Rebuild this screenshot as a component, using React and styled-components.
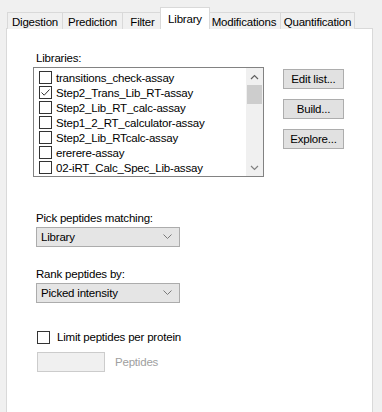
import React from "react";
import styled, { createGlobalStyle } from "styled-components";

const tabs = [
  { label: "Digestion", width: 56 },
  { label: "Prediction", width: 61 },
  { label: "Filter", width: 41 },
  { label: "Library", width: 50, active: true },
  { label: "Modifications", width: 74 },
  { label: "Quantification", width: 75 },
];

const libraries = [
  { name: "transitions_check-assay" },
  { name: "Step2_Trans_Lib_RT-assay", checked: true },
  { name: "Step2_Lib_RT_calc-assay" },
  { name: "Step1_2_RT_calculator-assay" },
  { name: "Step2_Lib_RTcalc-assay" },
  { name: "ererere-assay" },
  { name: "02-iRT_Calc_Spec_Lib-assay" },
];

const Chevron = ({ up }) => (
  <svg width="9" height="6" viewBox="0 0 9 6">
    <path
      d={up ? "M1 5 L4.5 1.5 L8 5" : "M1 1 L4.5 4.5 L8 1"}
      fill="none"
      stroke={up ? "#606060" : "#808080"}
      strokeWidth="1.2"
    />
  </svg>
);

const Check = ({ checked }) => (
  <CheckBox>
    {checked && (
      <svg width="11" height="11" viewBox="0 0 11 11">
        <path d="M1.5 5.5 L4.2 8.2 L9.5 2.5" fill="none" stroke="#333" strokeWidth="1" />
      </svg>
    )}
  </CheckBox>
);

const Dropdown = ({ value }) => (
  <Select>
    <span>{value}</span>
    <svg width="9" height="6" viewBox="0 0 9 6">
      <path d="M0.5 0.5 L4.5 4.5 L8.5 0.5" fill="none" stroke="#7a7a7a" strokeWidth="1" />
    </svg>
  </Select>
);

const App = () => (
  <>
    <Global />
    <Page>
      <TabStrip>
        {tabs.map(t => (
          <Tab key={t.label} $width={t.width} $active={t.active}>
            {t.label}
          </Tab>
        ))}
      </TabStrip>
      <Panel>
        <Label>Libraries:</Label>
        <LibraryRow>
          <ListBox>
            <Items>
              {libraries.map(lib => (
                <Item key={lib.name}>
                  <Check checked={lib.checked} />
                  {lib.name}
                </Item>
              ))}
            </Items>
            <ScrollBar>
              <ArrowCell>
                <Chevron up />
              </ArrowCell>
              <Thumb />
              <Track />
              <ArrowCell>
                <Chevron />
              </ArrowCell>
            </ScrollBar>
          </ListBox>
          <Buttons>
            <Button>Edit list...</Button>
            <Button>Build...</Button>
            <Button>Explore...</Button>
          </Buttons>
        </LibraryRow>

        <Field $top={34}>
          <FieldLabel>Pick peptides matching:</FieldLabel>
          <Dropdown value="Library" />
        </Field>

        <Field $top={20}>
          <FieldLabel>Rank peptides by:</FieldLabel>
          <Dropdown value="Picked intensity" />
        </Field>

        <LimitRow>
          <Check />
          Limit peptides per protein
        </LimitRow>
        <PeptideRow>
          <TextBox />
          <Muted>Peptides</Muted>
        </PeptideRow>
      </Panel>
    </Page>
  </>
);

const Global = createGlobalStyle`
  html, body {
    margin: 0;
    background: #f0f0f0;
    font-family: "Liberation Sans", Arial, sans-serif;
    font-size: 11.5px;
    color: #000;
  }
`;

const Page = styled.div`
  width: 382px;
  height: 412px;
  overflow: hidden;
  padding: 8px 0 0 6px;
  box-sizing: border-box;
  letter-spacing: -0.2px;
`;

const TabStrip = styled.div`
  display: flex;
  align-items: flex-end;
  height: 21px;
  padding-left: 1px;
  position: relative;
  z-index: 1;
`;

const Tab = styled.div`
  width: ${p => p.$width}px;
  height: ${p => (p.$active ? 22 : 17)}px;
  margin: ${p => (p.$active ? "0 -2px 0 -3px" : "0 0 0 -1px")};
  padding-top: ${p => (p.$active ? 0 : 1)}px;
  flex: none;
  box-sizing: border-box;
  display: flex;
  align-items: center;
  justify-content: center;
  white-space: nowrap;
  border: 1px solid #d9d9d9;
  border-bottom: none;
  background: ${p => (p.$active ? "#fff" : "#f0f0f0")};
  position: relative;
  z-index: ${p => (p.$active ? 2 : 1)};
  &:first-child {
    margin-left: 0;
  }
`;

const Panel = styled.div`
  width: 367px;
  height: 400px;
  margin-top: -1px;
  box-sizing: border-box;
  background: #fff;
  border: 1px solid #d9d9d9;
  padding: 23px 0 0 26px;
  display: flex;
  flex-direction: column;
  align-items: flex-start;
`;

const Label = styled.div`
  margin-left: 3px;
  line-height: 13px;
  margin-bottom: 2px;
`;

const LibraryRow = styled.div`
  display: flex;
  align-items: flex-start;
  gap: 19px;
`;

const ListBox = styled.div`
  width: 231px;
  height: 110px;
  box-sizing: border-box;
  border: 1px solid #828282;
  background: #fff;
  display: flex;
`;

const Items = styled.div`
  flex: 1;
  padding: 2px 0 0 5px;
  overflow: hidden;
`;

const Item = styled.div`
  display: flex;
  align-items: center;
  gap: 4px;
  height: 15px;
  white-space: nowrap;
  color: #000;
`;

const CheckBox = styled.span`
  width: 13px;
  height: 13px;
  box-sizing: border-box;
  border: 1px solid #333;
  background: #fff;
  display: inline-flex;
  align-items: center;
  justify-content: center;
  flex: none;
`;

const ScrollBar = styled.div`
  width: 17px;
  background: #f0f0f0;
  display: flex;
  flex-direction: column;
`;

const ArrowCell = styled.div`
  height: 17px;
  display: flex;
  align-items: center;
  justify-content: center;
`;

const Thumb = styled.div`
  height: 19px;
  margin: 0 1px;
  background: #cdcdcd;
`;

const Track = styled.div`
  flex: 1;
`;

const Buttons = styled.div`
  display: flex;
  flex-direction: column;
  gap: 10px;
  margin-top: 2px;
`;

const Button = styled.button`
  width: 61px;
  height: 20px;
  padding: 0;
  font: inherit;
  letter-spacing: -0.2px;
  color: #000;
  background: #e1e1e1;
  border: 1px solid #adadad;
`;

const Field = styled.div`
  margin: ${p => p.$top}px 0 0 3px;
  display: flex;
  flex-direction: column;
  gap: 2px;
`;

const FieldLabel = styled.div`
  line-height: 14px;
`;

const Select = styled.div`
  width: 144px;
  height: 20px;
  box-sizing: border-box;
  padding: 0 7px 0 4px;
  background: #e5e5e5;
  border: 1px solid #acacac;
  display: flex;
  align-items: center;
  justify-content: space-between;
`;

const LimitRow = styled.div`
  margin: 27px 0 0 4px;
  display: flex;
  align-items: center;
  gap: 7px;
  height: 14px;
`;

const PeptideRow = styled.div`
  margin: 8px 0 0 4px;
  display: flex;
  align-items: center;
  gap: 10px;
`;

const TextBox = styled.div`
  width: 68px;
  height: 20px;
  box-sizing: border-box;
  background: #f0f0f0;
  border: 1px solid #cccccc;
`;

const Muted = styled.span`
  color: #a0a0a0;
`;

export default App;
